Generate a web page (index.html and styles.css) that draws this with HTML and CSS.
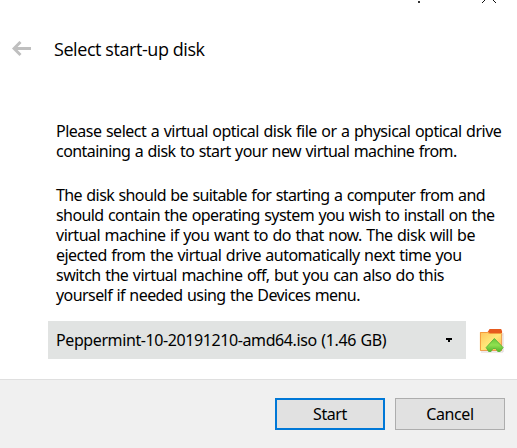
FILE: index.html
```html
<!DOCTYPE html>
<html lang="en">
<head>
<meta charset="utf-8">
<title>Select start-up disk</title>
<link rel="stylesheet" href="styles.css">
</head>
<body>
<main class="wizard">
  <div class="titlebar">
    <svg width="100" height="4" viewBox="0 0 100 4" shape-rendering="crispEdges">
      <rect x="1" y="1" width="2" height="2" fill="#333"/>
      <path d="M65 2h1v1h-1zM66 1h1v1h-1zM67 0h1v1h-1zM76 0h1v1h-1zM77 1h1v1h-1zM78 2h1v1h-1z" fill="#111"/>
    </svg>
  </div>
  <header class="heading">
    <svg class="back" width="20" height="16" viewBox="0 0 20 16" fill="none" stroke="#bfbfbf" stroke-width="3"><path d="M19 7.500H2M8.500 1L2 7.500l6.500 6.500"/></svg>
    <h1>Select start-up disk</h1>
  </header>
  <section class="copy">
    <p><span class="l1">Please select a virtual optical disk file or a physical optical drive</span><span class="l2">containing a disk to start your new virtual machine from.</span></p>
    <p><span class="l3">The disk should be suitable for starting a computer from and</span><span class="l4">should contain the operating system you wish to install on the</span><span class="l5">virtual machine if you want to do that now. The disk will be</span><span class="l6">ejected from the virtual drive automatically next time you</span><span class="l7">switch the virtual machine off, but you can also do this</span><span class="l8">yourself if needed using the Devices menu.</span></p>
  </section>
  <div class="picker">
    <div class="select">
      <span class="l9">Peppermint-10-20191210-amd64.iso (1.46 GB)</span>
      <svg width="6" height="4" viewBox="0 0 6 4" shape-rendering="crispEdges"><path d="M0 0h6v2H4v2H2V2H0z" fill="#000"/></svg>
    </div>
    <svg class="folder" width="25" height="25" viewBox="0 0 26 25" preserveAspectRatio="none">
      <defs>
        <linearGradient id="f" x1="0" y1="0" x2="1" y2="1"><stop offset="0" stop-color="#ffc35c"/><stop offset=".5" stop-color="#ffe87a"/><stop offset="1" stop-color="#ffad4a"/></linearGradient>
        <linearGradient id="g" x1="0" y1="0" x2="0" y2="1"><stop offset="0" stop-color="#68c83a"/><stop offset=".5" stop-color="#90e050"/><stop offset="1" stop-color="#55b52c"/></linearGradient>
      </defs>
      <path d="M2 24h23V5" fill="none" stroke="#ddd3d6" stroke-width="1"/>
      <path d="M9 4l2-3h12l1 2v5H9z" fill="#e65a1e"/>
      <path d="M1 4h8l2 1h13v18H1z" fill="url(#f)"/>
      <path d="M1.500 22.500V4.500H9l2 1h12.500" fill="none" stroke="#f49a3c"/>
      <path d="M1.500 22.500h22V6" fill="none" stroke="#ef9d55"/>
      <path d="M16 10.500L25 19.500l-3 4h-2.500l-2-3h-3l-2 3h-2.500L7.500 19.500z" fill="url(#g)" stroke="#5cb93a"/>
    </svg>
  </div>
  <footer class="actions">
    <button class="button primary" type="button"><span>Start</span></button>
    <button class="button" type="button"><span>Cancel</span></button>
  </footer>
</main>
</body>
</html>
```
FILE: styles.css
```css
* { box-sizing: border-box; }
body { margin: 0; background: #fff; color: #000; font: 16px/20px "Noto Sans", sans-serif; }
.wizard { width: 517px; height: 448px; display: flex; flex-direction: column; overflow: hidden; }
svg { display: block; flex: none; }
.titlebar { height: 36px; padding-left: 417px; }
.heading { height: 26px; display: flex; align-items: center; gap: 22px; padding-left: 12px; }
h1 { margin: 0; font: 400 18px/26px "Open Sans", sans-serif; letter-spacing: -0.43px; white-space: nowrap; }
.copy { margin: 59px 0 0 56px; }
.copy p { margin: 0 0 24px; }
.copy span { display: block; width: max-content; white-space: nowrap; letter-spacing: -0.5px; word-spacing: 0.8px; }
.copy .l2 { letter-spacing: -0.555px; }
.copy .l3 { letter-spacing: -0.6px; }
.copy .l4 { letter-spacing: -0.58px; }
.copy .l6 { letter-spacing: -0.53px; }
.copy .l8 { letter-spacing: -0.57px; }
.picker { margin-top: -8px; display: flex; align-items: center; padding-left: 48px; gap: 13px; }
.select { width: 418px; height: 38px; background: #e1e3e2; display: flex; align-items: center; justify-content: space-between; padding: 0 14px 0 8px; }
.select span { white-space: nowrap; letter-spacing: -0.4px; word-spacing: 0.8px; }
.actions { margin-top: auto; height: 69px; background: #f0f0f0; border-top: 1px solid #dfdfdf; display: flex; justify-content: flex-end; align-items: flex-start; gap: 10px; padding: 18px 12px 0 0; }
.button { width: 110px; height: 32px; padding: 0; background: #e1e1e1; border: 1px solid #adadad; font: 16px/20px "Noto Sans", sans-serif; color: #000; letter-spacing: -0.4px; }
.primary { border: 2px solid #0078d7; }
```
